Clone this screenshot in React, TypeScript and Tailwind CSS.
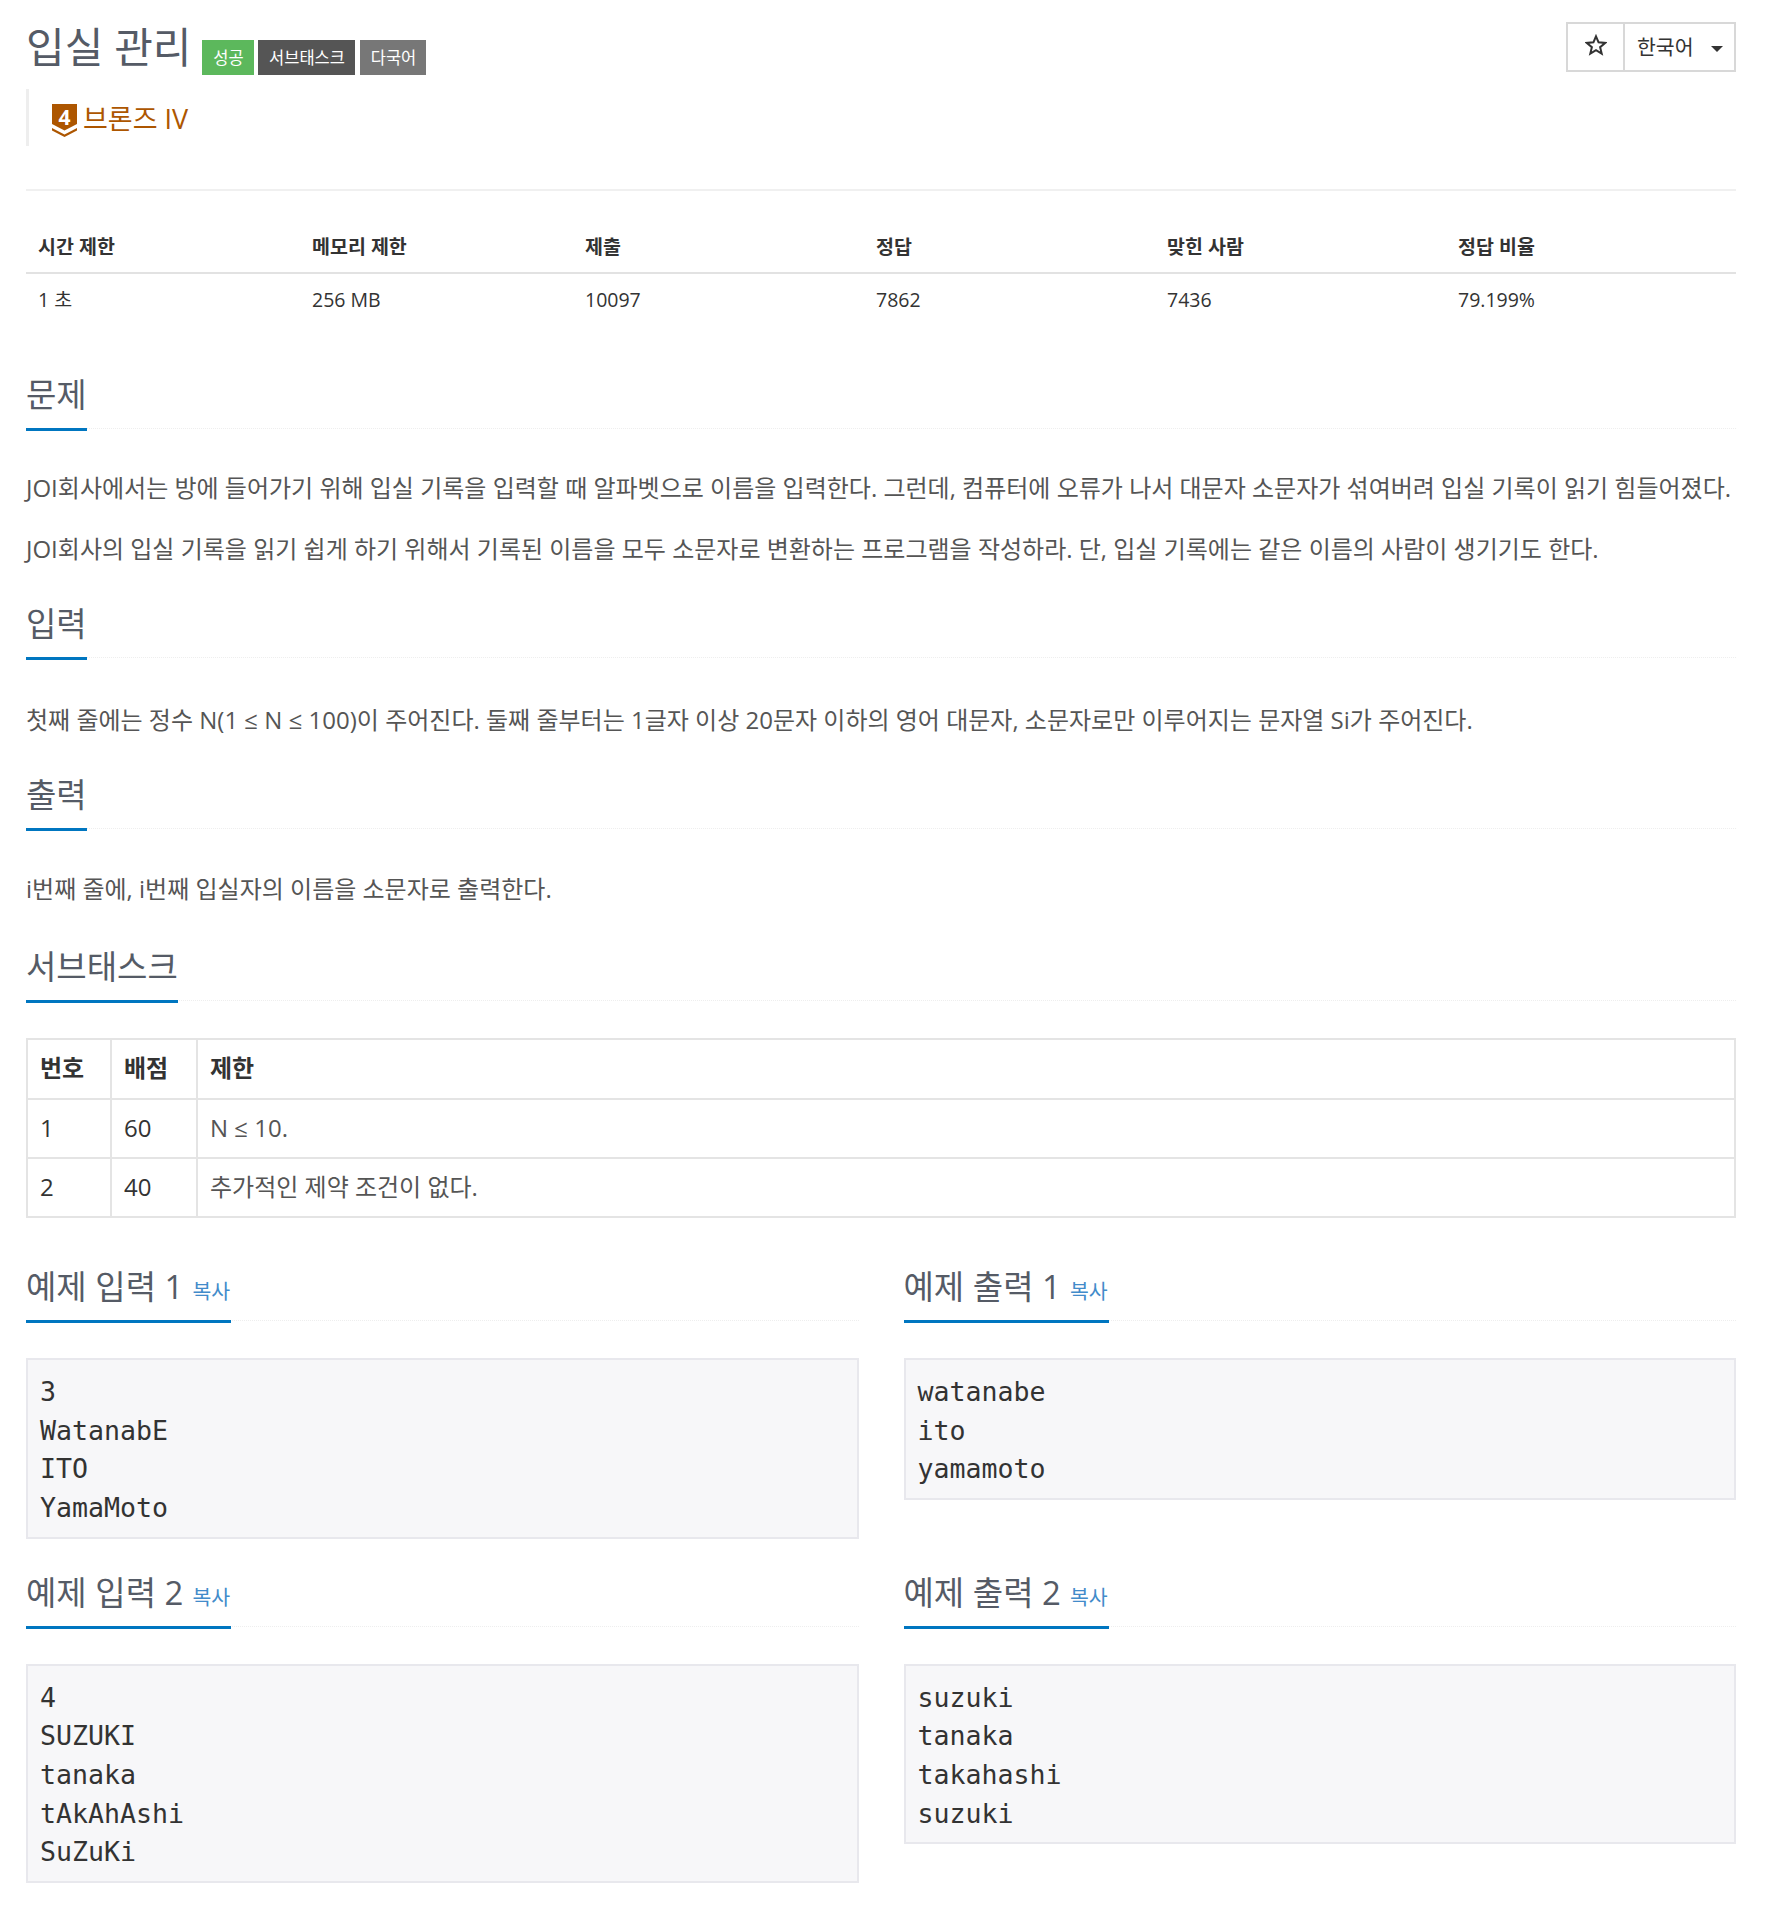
const sans = "font-['Open_Sans','Noto_Sans_CJK_KR',sans-serif]";

function Heading({ title, copy }: { title: string; copy?: boolean }) {
  return (
    <div className="h-[56px] border-b border-dotted border-[#eeeeee] flex">
      <div className="h-[58px] border-b-[3px] border-[#0076c0] flex items-start">
        <span className="text-[33px] leading-[44px] text-[#555b66] whitespace-pre">{title}</span>
        {copy && <span className="ml-[9px] mr-[1px] mt-[13px] text-[20.5px] leading-[26px] text-[#428bca]">복사</span>}
      </div>
    </div>
  );
}

function Sample({ title, lines }: { title: string; lines: string[] }) {
  return (
    <div className="flex-1 min-w-0">
      <Heading title={title} copy />
      <pre className="mt-[37px] bg-[#f7f7f9] border-2 border-[#e8e8ed] px-[12px] pt-[13px] pb-[9px] text-[26.6px] leading-[38.67px] text-[#333333] font-['DejaVu_Sans_Mono',monospace]">
        {lines.join("\n")}
      </pre>
    </div>
  );
}

const STATS = [
  ["시간 제한", "1 초", "w-[274px]"],
  ["메모리 제한", "256 MB", "w-[273px]"],
  ["제출", "10097", "w-[291px]"],
  ["정답", "7862", "w-[291px]"],
  ["맞힌 사람", "7436", "w-[291px]"],
  ["정답 비율", "79.199%", "flex-1"],
];

const SUBTASKS = [
  ["1", "60", "N ≤ 10."],
  ["2", "40", "추가적인 제약 조건이 없다."],
];

export default function App() {
  return (
    <div className={`${sans} bg-white w-[1766px] h-[1907px] px-[26px] pr-[30px] text-[#333333]`}>
      {/* 제목 */}
      <div className="h-[191px] border-b-2 border-[#f0f0f0] relative">
        <div className="flex items-start pt-[20px]">
          <h1 className="text-[42px] leading-[54px] text-[#555b66]">입실 관리</h1>
          <div className="flex ml-[11px] mt-[20px] gap-[4px] text-[16.5px] leading-[35px] text-white">
            <span className="w-[52px] text-center bg-[#5cb85c]">성공</span>
            <span className="w-[97px] text-center bg-[#555555]">서브태스크</span>
            <span className="w-[66px] text-center bg-[#777777] ml-[1px]">다국어</span>
          </div>
        </div>
        <div className="absolute right-0 top-[22px] h-[50px] flex border-2 border-[#d8d8d8]">
          <div className="w-[57px] flex items-center justify-center border-r-2 border-[#d8d8d8]">
            <svg width="22" height="22" viewBox="0 0 24 24" fill="none" stroke="#333333" strokeWidth="2.2" className="-mt-[4px]">
              <path d="M12 2.5l2.8 6.6 7.2.6-5.5 4.7 1.7 7-6.2-3.7-6.2 3.7 1.7-7L2 9.7l7.2-.6z" />
            </svg>
          </div>
          <div className="w-[109px] flex items-center pl-[12px] text-[20.5px] text-[#333333]">
            한국어
            <span className="ml-[17px] mt-[3px] w-0 h-0 border-x-[6px] border-x-transparent border-t-[6px] border-t-[#333333]" />
          </div>
        </div>
        <div className="mt-[14px] h-[57px] border-l-[3px] border-[#eeeeee] flex items-center pl-[23px]">
          <div className="relative w-[25px] h-[33px] mr-[6px] mt-[6px]">
            <svg width="25" height="33" viewBox="0 0 25 33">
              <path d="M0 0h25v20l-12.5 6.5L0 20z" fill="#ad5600" />
              <path d="M0 24l12.5 6.5L25 24v2.5L12.5 33 0 26.5z" fill="#ad5600" />
            </svg>
            <span className="absolute inset-x-0 top-[3px] text-center text-[21px] leading-[20px] font-bold text-white">4</span>
          </div>
          <span className="text-[27px] text-[#ad5600] mt-[4px]">브론즈 IV</span>
        </div>
      </div>

      {/* 제한 표 */}
      <div className="mt-[35px] text-[19.5px]">
        <div className="flex h-[48px] pb-[4px] border-b-2 border-[#e2e2e2] font-bold items-center">
          {STATS.map(([h, , w]) => (
            <div key={h} className={`${w} pl-[12px]`}>{h}</div>
          ))}
        </div>
        <div className="flex h-[53px] pb-[2px] items-center">
          {STATS.map(([h, v, w]) => (
            <div key={h} className={`${w} pl-[12px]`}>{v}</div>
          ))}
        </div>
      </div>

      <div className="mt-[46px]"><Heading title="문제" /></div>
      <div className="text-[24px] leading-[32px] text-[#555555]">
        <p className="mt-[43px] whitespace-nowrap">JOI회사에서는 방에 들어가기 위해 입실 기록을 입력할 때 알파벳으로 이름을 입력한다. 그런데, 컴퓨터에 오류가 나서 대문자 소문자가 섞여버려 입실 기록이 읽기 힘들어졌다.</p>
        <p className="mt-[29px] whitespace-nowrap">JOI회사의 입실 기록을 읽기 쉽게 하기 위해서 기록된 이름을 모두 소문자로 변환하는 프로그램을 작성하라. 단, 입실 기록에는 같은 이름의 사람이 생기기도 한다.</p>
      </div>

      <div className="mt-[37px]"><Heading title="입력" /></div>
      <p className="mt-[46px] text-[24px] leading-[32px] text-[#555555]">첫째 줄에는 정수 N(1 ≤ N ≤ 100)이 주어진다. 둘째 줄부터는 1글자 이상 20문자 이하의 영어 대문자, 소문자로만 이루어지는 문자열 Si가 주어진다.</p>

      <div className="mt-[37px]"><Heading title="출력" /></div>
      <p className="mt-[44px] text-[24px] leading-[32px] text-[#555555]">i번째 줄에, i번째 입실자의 이름을 소문자로 출력한다.</p>

      <div className="mt-[40px]"><Heading title="서브태스크" /></div>

      {/* 서브태스크 표 */}
      <div className="mt-[37px] border-2 border-[#e4e4e4] text-[24px]">
        <div className="flex h-[58px] items-center font-bold">
          <div className="w-[84px] h-full flex items-center pl-[12px] pb-[2px] border-r-2 border-[#e4e4e4]">번호</div>
          <div className="w-[86px] h-full flex items-center pl-[12px] pb-[2px] border-r-2 border-[#e4e4e4]">배점</div>
          <div className="flex-1 pl-[12px] pb-[2px]">제한</div>
        </div>
        {SUBTASKS.map(([n, score, limit]) => (
          <div key={n} className="flex h-[59px] items-center border-t-2 border-[#e4e4e4]">
            <div className="w-[84px] h-full flex items-center pl-[12px] pb-[2px] border-r-2 border-[#e4e4e4]">{n}</div>
            <div className="w-[86px] h-full flex items-center pl-[12px] pb-[2px] border-r-2 border-[#e4e4e4]">{score}</div>
            <div className="flex-1 pl-[12px] pb-[2px] text-[#555555]">{limit}</div>
          </div>
        ))}
      </div>

      {/* 예제 */}
      <div className="mt-[47px] flex items-start gap-[45px]">
        <Sample title="예제 입력 1" lines={["3", "WatanabE", "ITO", "YamaMoto"]} />
        <Sample title="예제 출력 1" lines={["watanabe", "ito", "yamamoto"]} />
      </div>
      <div className="mt-[32px] flex items-start gap-[45px]">
        <Sample title="예제 입력 2" lines={["4", "SUZUKI", "tanaka", "tAkAhAshi", "SuZuKi"]} />
        <Sample title="예제 출력 2" lines={["suzuki", "tanaka", "takahashi", "suzuki"]} />
      </div>
    </div>
  );
}
